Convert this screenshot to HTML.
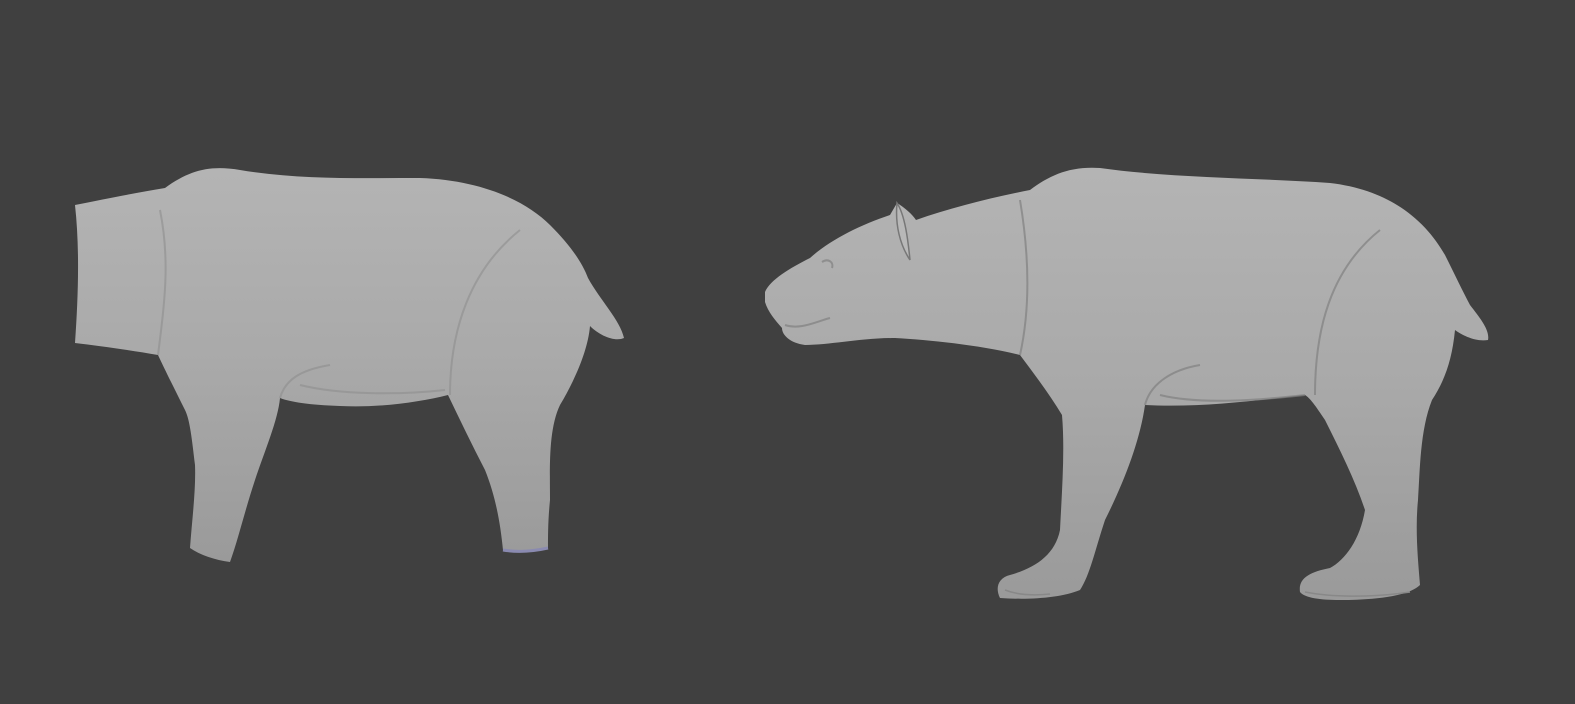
<!DOCTYPE html>
<html><head><style>
html,body{margin:0;padding:0;background:#404040;width:1575px;height:704px;overflow:hidden}
</style></head><body>
<svg width="1575" height="704" viewBox="0 0 1575 704" xmlns="http://www.w3.org/2000/svg">
<defs>
<linearGradient id="g" x1="0" y1="0" x2="0" y2="1">
<stop offset="0" stop-color="#b4b4b4"/><stop offset="0.5" stop-color="#a9a9a9"/><stop offset="1" stop-color="#9a9a9a"/>
</linearGradient>
</defs>
<rect width="1575" height="704" fill="#404040"/>
<!-- left bear -->
<path fill="url(#g)" d="M75,205 C110,198 140,192 165,188 C190,170 210,165 240,170 C300,180 360,178 420,178 C480,180 525,200 550,225 C570,245 582,262 588,278 C600,300 620,320 624,338 C615,342 600,336 590,326 C588,350 575,380 560,405 C548,430 550,470 550,500 C548,520 548,535 548,548 C530,552 515,552 503,550 C500,520 495,495 485,470 C472,445 460,420 448,395 C420,402 380,408 340,406 C310,405 290,402 280,398 C278,420 265,450 255,480 C245,510 238,540 230,562 C215,560 200,555 190,548 C192,520 196,490 195,465 C192,440 190,420 185,410 C175,390 165,370 158,355 C130,350 100,346 75,343 C78,300 80,250 75,205 Z"/>
<path d="M503,550 C515,552 530,552 548,548" stroke="#8a8ab0" stroke-width="3" fill="none"/>
<path d="M280,398 C285,380 300,370 330,365 M300,385 C340,395 400,395 445,390 M160,210 C170,260 165,300 158,355 M450,395 C450,330 470,270 520,230" stroke="#8e8e8e" stroke-width="2" fill="none" opacity="0.6"/>
<!-- right bear -->
<path fill="url(#g)" d="M765,292 C770,280 790,268 810,258 C830,240 860,225 890,215 L897,203 C905,208 912,214 916,220 C950,208 990,198 1030,190 C1050,175 1070,166 1100,168 C1170,178 1260,178 1330,183 C1390,190 1425,220 1445,255 C1455,275 1462,290 1470,305 C1480,318 1490,330 1488,340 C1475,342 1462,335 1455,330 C1452,360 1445,380 1432,400 C1420,430 1420,470 1418,500 C1415,530 1418,560 1420,585 C1410,595 1380,600 1340,600 C1320,600 1305,598 1300,592 C1298,578 1310,572 1330,568 C1345,560 1360,540 1365,510 C1355,480 1340,450 1325,420 C1315,405 1310,398 1305,395 C1260,400 1200,408 1145,405 C1140,440 1125,480 1105,520 C1095,550 1090,575 1080,590 C1060,598 1030,600 1000,598 C995,588 998,578 1010,575 C1035,568 1055,555 1060,530 C1062,490 1065,450 1062,415 C1050,395 1035,375 1020,355 C980,345 930,340 895,338 C860,338 830,345 805,345 C790,343 782,335 782,328 C775,320 768,312 765,302 Z"/>
<path d="M897,203 C905,215 908,240 910,260 C900,245 895,225 897,203 Z" fill="#b8b8b8" stroke="#777" stroke-width="1.5"/>
<path d="M1145,405 C1150,385 1170,370 1200,365 M1160,395 C1200,405 1260,400 1305,395 M1020,200 C1030,260 1030,310 1020,355 M1315,395 C1315,330 1330,270 1380,230 M785,325 C800,330 815,322 830,318 M822,262 C828,258 834,262 832,268" stroke="#808080" stroke-width="2" fill="none" opacity="0.7"/>
<path d="M1005,590 C1015,594 1030,596 1050,594 M1305,592 C1330,597 1370,598 1410,592" stroke="#888" stroke-width="1.5" fill="none"/>
</svg>
</body></html>
